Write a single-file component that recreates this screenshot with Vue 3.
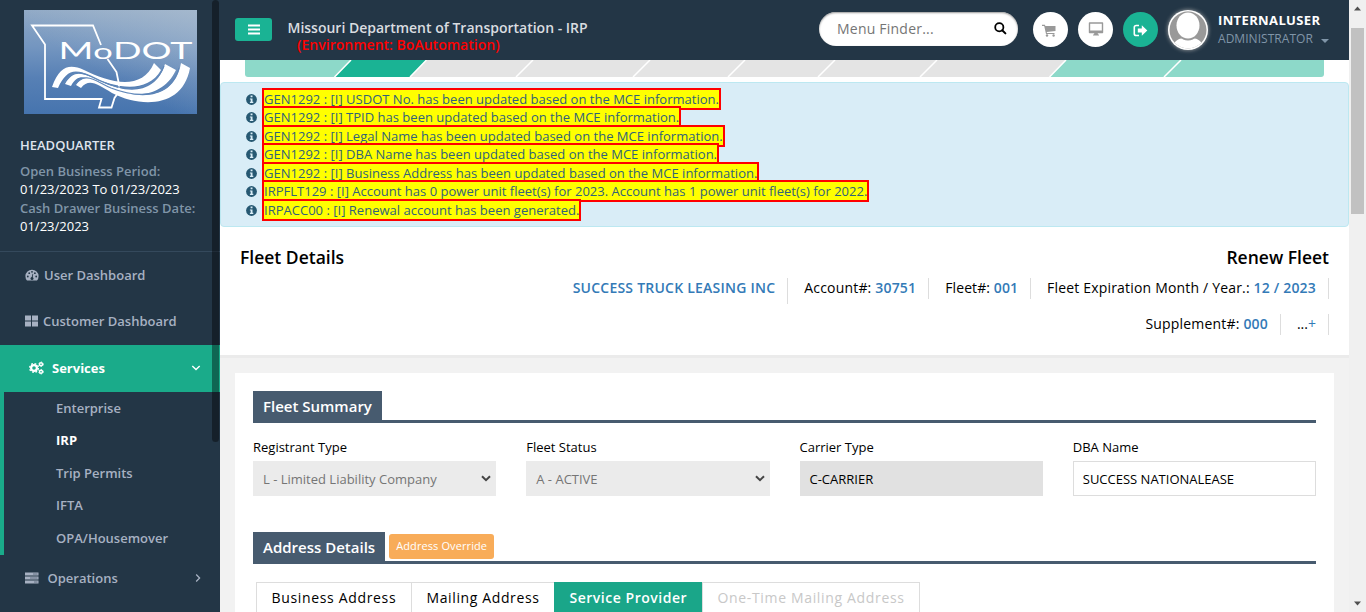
<script setup>
const messages = [
  'GEN1292 : [I] USDOT No. has been updated based on the MCE information.',
  'GEN1292 : [I] TPID has been updated based on the MCE information.',
  'GEN1292 : [I] Legal Name has been updated based on the MCE information.',
  'GEN1292 : [I] DBA Name has been updated based on the MCE information.',
  'GEN1292 : [I] Business Address has been updated based on the MCE information.',
  'IRPFLT129 : [I] Account has 0 power unit fleet(s) for 2023. Account has 1 power unit fleet(s) for 2022.',
  'IRPACC00 : [I] Renewal account has been generated.',
]
const subItems = ['Enterprise', 'IRP', 'Trip Permits', 'IFTA', 'OPA/Housemover']
const stepEdges = [288, 405, 500, 590, 692]
</script>

<template>
  <div class="page">
    <aside class="sidebar">
      <svg class="logo" viewBox="0 0 173 104" width="173" height="104">
        <defs>
          <linearGradient id="sky" x1="0.35" y1="0" x2="0.35" y2="1">
            <stop offset="0" stop-color="#8ea8c5" />
            <stop offset="0.35" stop-color="#7496c0" />
            <stop offset="0.65" stop-color="#5780b5" />
            <stop offset="1" stop-color="#4674ae" />
          </linearGradient>
          <linearGradient id="glow" x1="1" y1="0" x2="0.45" y2="0.6">
            <stop offset="0" stop-color="#b3c3d3" stop-opacity=".6" />
            <stop offset="1" stop-color="#b3c3d3" stop-opacity="0" />
          </linearGradient>
        </defs>
        <rect width="173" height="104" fill="url(#sky)" />
        <rect width="173" height="104" fill="url(#glow)" />
        <path d="M77 35 L69 15.500 H8 L21 34.500 V89 H77.500 L75 97.500 H87.500 L90.500 88 L95.500 81 L94.500 72 L92.500 62 L83.500 49" fill="none" stroke="#fff" stroke-width="1.800" />
        <text x="34.500" y="49" textLength="134" lengthAdjust="spacingAndGlyphs" class="logo-text">M<tspan font-size="22">o</tspan>DOT</text>
        <path d="M28 77 C36 55 46 54 60 60 C84 72 118 82 130 53 L137 60 C124 83 94 79 68 67 C50 57 42 61 34 78 Z" fill="#fff" />
        <path d="M41 74 C51 57 61 65 78 72 C106 85 132 83 141 54 L152 60 C139 88 108 89 82 77 C66 69 55 60 47 76 Z" fill="#fff" />
        <path d="M52 75 C62 61 72 72 88 79 C121 91 151 87 157 53 L166 58 C159 98 117 98 88 83 C73 74 65 68 57 78 Z" fill="#fff" />
        <path d="M39 74 C50 56 60 63 77 71 C105 84 131 80 140 56 M50 76 C61 60 71 71 87 78 C118 90 147 86 155 58" fill="none" stroke="#5f87b9" stroke-width="1.200" />
      </svg>
      <div class="office">
        <div class="hq">HEADQUARTER</div>
        <div class="lab">Open Business Period:</div>
        <div class="val">01/23/2023 To 01/23/2023</div>
        <div class="lab">Cash Drawer Business Date:</div>
        <div class="val">01/23/2023</div>
      </div>
      <nav>
        <div class="item user">
          <svg width="14" height="14" viewBox="0 0 14 14"><path d="M2 12.600 A6.600 6.600 0 1 1 12 12.600 Z" fill="currentColor" /><g fill="#233646"><circle cx="2.800" cy="8.500" r=".9" /><circle cx="4.200" cy="5.200" r=".9" /><circle cx="7" cy="3.800" r=".9" /><circle cx="9.900" cy="5.200" r=".9" /><circle cx="11.200" cy="8.500" r=".9" /><circle cx="7" cy="10.500" r="1.500" /><path d="M6.500 10 L7.600 5.800 L8.200 6 L7.500 10.500Z" /></g></svg>
          <span>User Dashboard</span>
        </div>
        <div class="item customer">
          <svg width="13" height="12" viewBox="0 0 13 12" fill="currentColor"><path d="M0 .5H6V5.500H0ZM7 .5H13V5.500H7ZM0 6.500H6V11.500H0ZM7 6.500H13V11.500H7Z" /></svg>
          <span>Customer Dashboard</span>
        </div>
        <div class="item services">
          <svg width="15" height="14" viewBox="0 0 15 14" fill="none" stroke="currentColor"><circle cx="5" cy="7" r="2.900" stroke-width="2.200" /><circle cx="5" cy="7" r="4.400" stroke-width="1.300" stroke-dasharray="1.750 1.706" /><circle cx="12" cy="3.300" r="1.500" stroke-width="1.400" /><circle cx="12" cy="3.300" r="2.300" stroke-width=".9" stroke-dasharray="1.200 1.200" /><circle cx="12" cy="10.700" r="1.500" stroke-width="1.400" /><circle cx="12" cy="10.700" r="2.300" stroke-width=".9" stroke-dasharray="1.200 1.200" /></svg>
          <span>Services</span>
          <svg class="arrow" width="10" height="6" viewBox="0 0 10 6"><path d="M1.300 1 L5 4.600 L8.700 1" fill="none" stroke="currentColor" stroke-width="1.400" /></svg>
        </div>
        <div class="sub">
          <div v-for="s in subItems" :key="s" :class="['subitem', { on: s === 'IRP' }]">{{ s }}</div>
        </div>
        <div class="item operations">
          <svg width="14" height="12" viewBox="0 0 14 12"><path d="M0 .5H13.500V3.500H0ZM0 4.500H13.500V7.500H0ZM0 8.500H13.500V11.500H0Z" fill="currentColor" /><path d="M8 2H12.500M5 6H12.500M9 10H12.500" stroke="#5d6c80" stroke-width=".9" /></svg>
          <span>Operations</span>
          <svg class="arrow" width="6" height="10" viewBox="0 0 6 10"><path d="M1.200 1.500 L4.600 5 L1.200 8.500" fill="none" stroke="currentColor" stroke-width="1.300" /></svg>
        </div>
      </nav>
      <div class="rail"></div>
    </aside>

    <main class="main">
      <header class="topbar">
        <div class="burger"><svg width="12" height="11" viewBox="0 0 12 11"><path d="M0 1.500H12M0 5.500H12M0 9.500H12" stroke="#fff" stroke-width="2" /></svg></div>
        <div class="title">
          <div class="dept">Missouri Department of Transportation - IRP</div>
          <div class="env">(Environment: BoAutomation)</div>
        </div>
        <div class="finder">
          <span>Menu Finder...</span>
          <svg width="13" height="13" viewBox="0 0 13 13"><circle cx="5.300" cy="5.300" r="4.100" fill="none" stroke="#000" stroke-width="1.800" /><path d="M8.200 8.200 L11.400 11.400" stroke="#000" stroke-width="2" stroke-linecap="round" /></svg>
        </div>
        <div class="round cart"><svg width="14" height="13" viewBox="0 0 14 13" fill="#999"><path d="M0 .8H2.900L3.400 2H13.500V7L4.700 8L5 9H12.500V10H4L2.200 2H0Z" /><circle cx="5" cy="11.500" r="1.200" /><circle cx="11.600" cy="11.500" r="1.200" /></svg></div>
        <div class="round screen"><svg width="16" height="15" viewBox="0 0 16 15"><path d="M1.500 1H14.500V10.500H1.500Z" fill="none" stroke="#999" stroke-width="1.400" stroke-linejoin="round" /><path d="M1 8.500H15V11H1ZM6.300 11H9.700L10 12.500H11V13.500H5V12.500H6Z" fill="#999" /></svg></div>
        <div class="round logout"><svg width="15" height="13" viewBox="0 0 15 13"><path d="M6 1.500H3.200Q1.300 1.500 1.300 3.300V9.700Q1.300 11.500 3.200 11.500H6" fill="none" stroke="#fff" stroke-width="1.600" /><path d="M4.800 4.500H8.800V1.300L14.300 6.500L8.800 11.700V8.500H4.800Z" fill="#fff" /></svg></div>
        <svg class="avatar" width="48" height="48" viewBox="0 0 48 48">
          <defs><clipPath id="face"><circle cx="24" cy="24" r="18.500" /></clipPath></defs>
          <circle cx="24" cy="24" r="20" fill="#fff" />
          <g clip-path="url(#face)"><rect width="48" height="48" fill="#999" /><path d="M9 44 C9 34 15 33 19 32 H29 C33 33 39 34 39 44Z" fill="#fff" /><ellipse cx="24" cy="20" rx="12.500" ry="14.500" fill="#999" /><ellipse cx="24" cy="19.500" rx="11.500" ry="13" fill="#fff" /></g>
        </svg>
        <div class="who">
          <div class="uname">INTERNALUSER</div>
          <div class="role"><span>ADMINISTRATOR</span><i></i></div>
        </div>
      </header>

      <section class="steps">
        <svg width="1079" height="17" viewBox="0 0 1079 17">
          <path d="M0 0H1079V14Q1079 17 1076 17H3Q0 17 0 14Z" fill="#8dd9c9" />
          <path d="M106 0H821L804.500 17H89.500Z" fill="#e4e4e4" />
          <path d="M106 0H181.500L165 17H89.500Z" fill="#1ab394" />
          <path d="M106 0L89.500 17M181.500 0L165 17M821 0L804.500 17M936 0L919 17" stroke="#fff" stroke-width="1.500" />
          <path v-for="x in stepEdges" :key="x" :d="`M${x} 0L${x - 17} 17`" stroke="#fff" stroke-width="1.500" />
        </svg>
      </section>

      <section class="alert">
        <div v-for="m in messages" :key="m" class="msg">
          <svg width="11" height="11" viewBox="0 0 11 11"><circle cx="5.500" cy="5.500" r="5.400" fill="#265872" /><path d="M4.600 1.600H6.500V3.300H4.600ZM3.900 4.400H6.500V7.700H7.300V9H3.900V7.700H4.700V5.600H3.900Z" fill="#d9edf7" /></svg>
          <span>{{ m }}</span>
        </div>
      </section>

      <section class="heading">
        <div class="heads"><h2>Fleet Details</h2><h2>Renew Fleet</h2></div>
        <div class="facts first">
          <div class="fact tall company"><b>SUCCESS TRUCK LEASING INC</b></div>
          <div class="fact">Account#: <b>30751</b></div>
          <div class="fact number">Fleet#: <b>001</b></div>
          <div class="fact">Fleet Expiration Month / Year.: <b>12 / 2023</b></div>
        </div>
        <div class="facts">
          <div class="fact">Supplement#: <b>000</b></div>
          <div class="fact more">...<em>+</em></div>
        </div>
      </section>

      <div class="content">
        <section class="card">
          <div class="bar"><h3>Fleet Summary</h3></div>
          <div class="fields">
            <div><label>Registrant Type</label><div class="box sel"><span>L - Limited Liability Company</span><svg width="10" height="7" viewBox="0 0 10 7"><path d="M1 1.200L5 5.200L9 1.200" fill="none" stroke="#444" stroke-width="2" /></svg></div></div>
            <div><label>Fleet Status</label><div class="box sel"><span>A - ACTIVE</span><svg width="10" height="7" viewBox="0 0 10 7"><path d="M1 1.200L5 5.200L9 1.200" fill="none" stroke="#444" stroke-width="2" /></svg></div></div>
            <div><label>Carrier Type</label><div class="box ro"><span>C-CARRIER</span></div></div>
            <div><label>DBA Name</label><div class="box open"><span>SUCCESS NATIONALEASE</span></div></div>
          </div>
          <div class="bar second"><h3>Address Details</h3><div class="override">Address Override</div></div>
          <div class="tabs">
            <div class="tab tb1">Business Address</div>
            <div class="tab tb2">Mailing Address</div>
            <div class="tab tb3">Service Provider</div>
            <div class="tab tb4">One-Time Mailing Address</div>
          </div>
        </section>
      </div>
    </main>

    <div class="scroll">
      <svg width="17" height="17" viewBox="0 0 17 17"><path d="M5 10.500L8.500 6.500L12 10.500Z" fill="#505050" /></svg>
      <div class="thumb"></div>
      <svg class="down" width="17" height="17" viewBox="0 0 17 17"><path d="M5 6.500L8.500 10.500L12 6.500Z" fill="#505050" /></svg>
    </div>
  </div>
</template>

<style>
html, body { margin: 0; overflow: hidden; }
</style>

<style scoped>
.page { display: flex; width: 1366px; height: 612px; overflow: hidden; background: #fff; font-family: "Open Sans", "Noto Sans", sans-serif; font-size: 13px; color: #000; white-space: nowrap; }
.page * { box-sizing: border-box; }
h2, h3 { margin: 0; }
svg { display: block; flex: none; }
.sidebar { position: relative; width: 220px; height: 612px; flex: none; background: #233646; color: #a7b1c2; font-weight: 600; }
.sidebar::before { content: ""; display: table; }
.logo { margin: 10px 0 0 24px; }
.logo-text { font-family: Lato, sans-serif; font-size: 24px; fill: #fff; font-weight: 400; }
.office { height: 138px; padding: 22px 0 0 20px; border-bottom: 1px solid #34495c; line-height: 18.500px; }
.hq { color: #dfe4ed; margin-bottom: 7px; }
.lab { color: #8095a8; }
.val { color: #fff; font-weight: 400; }
.item { display: flex; align-items: center; height: 47px; padding: 0 0 2px 25px; line-height: 18px; }
.item.user span { margin-left: 5px; }
.item.customer { height: 46px; }
.item.customer span { margin-left: 5px; }
.item.services { background: #1aab8a; color: #fff; font-weight: 700; padding-left: 29px; }
.services span { margin-left: 8px; }
.arrow { margin-left: auto; margin-right: 19px; }
.sub { height: 163px; padding-top: .5px; border-left: 4px solid #1aab8a; }
.subitem { height: 32.500px; line-height: 31.800px; padding-left: 52px; }
.subitem.on { color: #fff; font-weight: 700; }
.operations span { margin-left: 8.500px; }
.rail { position: absolute; left: 212px; top: 0; width: 7px; height: 442px; border-radius: 4px; background: rgba(0, 0, 0, .4); }
.main { width: 1129px; flex: none; }
.topbar { display: flex; height: 60px; background: #233646; align-items: flex-start; }
.burger { width: 37px; height: 23px; margin: 18px 0 0 15px; background: #1ab394; border-radius: 3px; display: flex; align-items: center; justify-content: center; }
.title { margin: 19px 0 0 15.500px; width: 531.500px; font-size: 14px; font-weight: 600; line-height: 17px; }
.dept { color: #dadde0; }
.env { color: #f00; margin-left: 9.500px; letter-spacing: .02px; }
.finder { display: flex; align-items: center; width: 199px; height: 34px; margin-top: 12px; padding: 0 11px 1px 18px; border-radius: 17px; background: #fff; justify-content: space-between; color: #757575; font-size: 14px; letter-spacing: .22px; box-shadow: inset 0 1px 2px #999; }
.round { width: 35px; height: 35px; margin-top: 12px; border-radius: 50%; background: #fff; display: flex; align-items: center; justify-content: center; }
.cart { margin-left: 15px; padding: 1px 3px 0 0; }
.screen, .logout { margin-left: 10px; }
.screen { padding-bottom: 1px; }
.logout { background: #1ab394; padding-top: 1px; }
.avatar { margin: 6px 0 0 6px; filter: drop-shadow(0 0 2px #aaa); }
.who { margin: 11px 0 0 6px; line-height: 18px; }
.uname { color: #fff; font-weight: 700; letter-spacing: .37px; }
.role { margin-top: 1px; color: #8095a8; display: flex; align-items: center; font-size: 12px; letter-spacing: .04px; }
.role i { margin: 4px 0 0 8px; border: 4px solid transparent; border-top-color: #8095a8; border-bottom: 0; }
.steps { height: 22px; padding-left: 25px; background: #fff; }
.alert { height: 145px; background: #d9edf7; border: 1px solid #bce8f1; border-radius: 4px; padding: 6.700px 0 0 25px; }
.msg { height: 18.500px; line-height: 18.500px; display: flex; align-items: center; }
.msg svg { margin-top: 1px; }
.msg span { margin-left: 5px; height: 22px; line-height: 18px; background: #ff0; border: 2px solid #f00; color: #31627a; letter-spacing: .013px; }
.heading { height: 131px; background: #fff; border-bottom: 3px solid #ebebeb; padding: 18px 20px 0; }
.heads { display: flex; justify-content: space-between; line-height: 25px; }
h2 { font-size: 17.500px; font-weight: 600; }
.facts { display: flex; justify-content: flex-end; height: 36px; font-size: 14px; line-height: 19px; letter-spacing: .18px; }
.first { margin-top: 8px; }
.fact { height: 21px; padding: 0 12px 0 16px; border-right: 1px solid #ddd; }
.fact.tall { height: 26px; }
.company { letter-spacing: .23px; }
.number { letter-spacing: .09px; }
.more { letter-spacing: 0; }
.fact b { font-weight: 600; color: #337ab7; }
.fact em { font-style: normal; color: #337ab7; }
.content { background: #f2f2f2; height: 254px; padding: 15px 15px 0; }
.card { height: 239px; padding: 18px; background: #fff; overflow: hidden; }
.bar { display: flex; height: 32px; border-bottom: 3px solid #475b6f; }
h3 { height: 30px; padding: 0 10px; background: #475b6f; color: #fff; font-size: 15px; line-height: 31px; font-weight: 600; }
.fields { display: grid; grid-template-columns: repeat(4, 1fr); gap: 30px; margin-top: 15px; }
label { display: block; line-height: 18px; margin-bottom: 5px; }
.box { display: flex; align-items: center; justify-content: space-between; height: 35px; padding: 1px 5px 0 10px; }
.box svg { margin-top: -2px; }
.sel { background: #ebebeb; color: #757575; }
.ro { background: #e1e1e1; }
.open { border: 1px solid #ddd; padding: 0 9px; }
.second { margin-top: 36px; }
.override { width: 105px; height: 25px; margin: 2px 0 0 4px; background: #f8ac59; border-radius: 3px; color: #fff; font-size: 11px; letter-spacing: .1px; line-height: 24px; text-align: center; }
.tabs { display: flex; margin: 18px 0 0 3px; height: 40px; font-size: 14px; line-height: 29px; letter-spacing: .66px; }
.tab { border: 1px solid #ddd; border-right-width: 0; padding-left: 14.500px; height: 40px; }
.tb1 { width: 155px; }
.tb2 { width: 143px; letter-spacing: .62px; }
.tb3 { width: 148px; background: #1aa689; border-color: #1aa689; color: #fff; font-weight: 600; letter-spacing: .52px; }
.tb4 { width: 218px; border-right-width: 1px; color: #c8c8c8; }
.scroll { width: 17px; background: #f0f0f0; display: flex; flex-direction: column; }
.thumb { width: 13px; height: 186px; margin: 11px 0 0 2px; background: #c1c1c1; }
.down { margin-top: auto; }
</style>
